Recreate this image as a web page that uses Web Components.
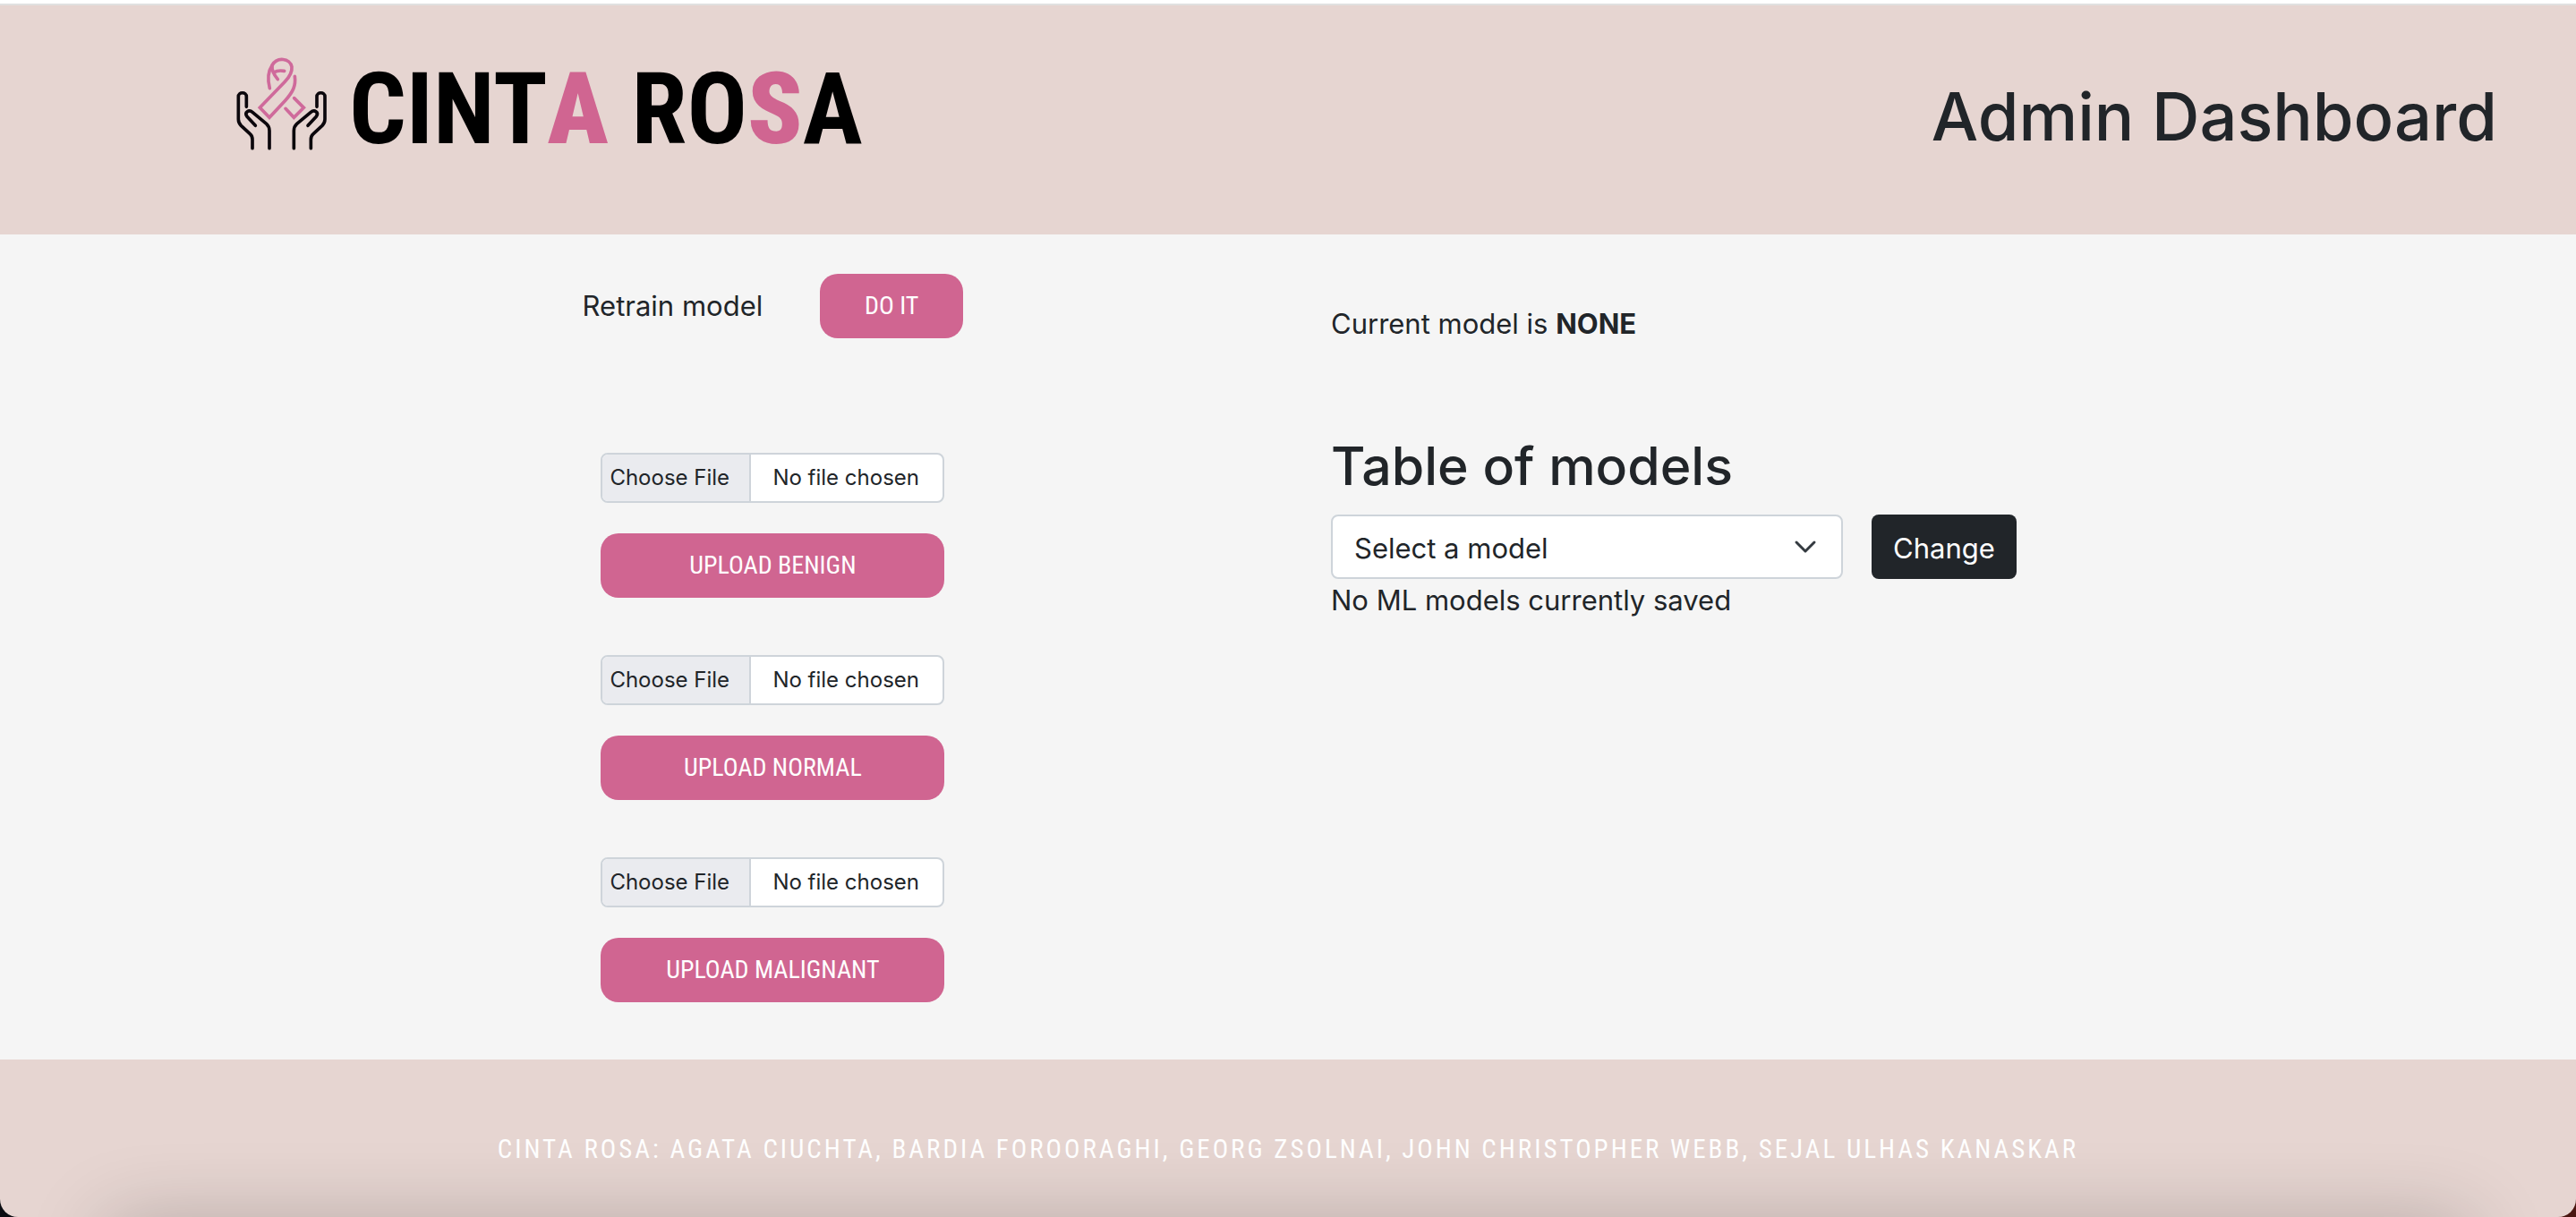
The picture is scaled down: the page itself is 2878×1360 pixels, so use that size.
<!DOCTYPE html>
<html lang="en">
<head>
<meta charset="utf-8">
<title>Cinta Rosa – Admin Dashboard</title>
<style>
  html { background: linear-gradient(90deg, #0b0d12 50%, #4a1611 50%); }
  body {
    margin: 0;
    --pink: #d06591;
    --blush: #e6d5d1;
    --ink: #212529;
    --line: #ced4da;
    --condensed: "Roboto Condensed", "Liberation Sans Narrow", "Liberation Sans", sans-serif;
    font: 400 31px/48px Inter, "Liberation Sans", sans-serif;
    color: var(--ink);
  }
</style>
</head>
<body>
<admin-page></admin-page>

<script>
const define = (name, html) => {
  const template = document.createElement('template');
  template.innerHTML = html;
  customElements.define(name, class extends HTMLElement {
    constructor() {
      super();
      this.attachShadow({ mode: 'open' }).append(template.content.cloneNode(true));
    }
  });
};

define('brand-logo', `
  <style>
    :host { display: flex; align-items: flex-start; gap: 10px; }
    svg { width: 130px; height: 130px; flex: none; fill: none; stroke-width: 11; stroke-linecap: round; stroke-linejoin: round; }
    .hand { stroke: #0b070c; }
    .ribbon { stroke: #cf6a9b; stroke-linejoin: miter; }
    span { font: 700 112px/144px var(--condensed); color: #000; white-space: nowrap; }
    b { color: var(--pink); }
  </style>
  <svg viewBox="0 0 390 390" aria-hidden="true">
    <g class="hand">
      <g id="h">
        <path d="M76 208V174C76 157 49 157 49 174V250Q49 262 58 271L88 299Q96 306 96 318V347"/>
        <path d="M106 271L78 241C68 226 84 216 97 227L143 265Q153 274 153 288V347"/>
      </g>
      <use href="#h" transform="translate(388) scale(-1 1)"/>
    </g>
    <g class="ribbon">
      <path d="M154 146C146 115 150 87 162 69C178 40 222 44 228 74C230 92 221 107 205 124L121 211L153 244L205 188C234 157 242 135 238 106"/>
      <path d="M181 116C172 105 160 88 162 70M168 93C178 86 190 86 203 88"/>
      <path d="M236 179L268 211L235 244L207 214"/>
    </g>
  </svg>
  <span>CINT<b>A</b> RO<b>S</b>A</span>
`);

define('page-header', `
  <style>
    :host { display: block; border-top: 4px solid #fff; background: var(--blush); }
    header { display: flex; justify-content: space-between; align-items: flex-start; box-sizing: border-box; min-height: 258px; padding: 44px 88px 0 250px; border-top: 2px solid #e0e0e0; }
    h1 { margin: 32px 0 0; font: 500 74px/96px Inter, sans-serif; }
  </style>
  <header>
    <brand-logo></brand-logo>
    <h1><slot></slot></h1>
  </header>
`);

define('pink-button', `
  <style>
    :host { display: block; }
    button { width: 100%; height: 72px; padding: 0 40px; border: 0; border-radius: 20px; background: var(--pink); color: #fff; font: 400 28px/48px var(--condensed); white-space: nowrap; }
  </style>
  <button type="button"><slot></slot></button>
`);

define('upload-form', `
  <style>
    :host { display: block; width: 384px; }
    form { display: grid; gap: 34px; }
    input { box-sizing: border-box; width: 100%; height: 56px; border: 2px solid var(--line); border-radius: 8px; background: #fff; color: var(--ink); font: 400 24px/52px Inter, sans-serif; overflow: hidden; }
    input::file-selector-button { height: 52px; width: 166px; margin: 0 24px 0 0; padding: 0 8px; border: 0; border-right: 2px solid var(--line); background: #eaebef; color: var(--ink); font: inherit; text-align: left; }
  </style>
  <form>
    <input type="file" aria-label="Image archive">
    <pink-button><slot></slot></pink-button>
  </form>
`);

define('training-panel', `
  <style>
    :host { display: flex; flex-direction: column; align-items: center; gap: 64px; }
    .retrain { display: flex; align-items: center; gap: 64px; margin-bottom: 64px; }
    .retrain pink-button { width: 160px; }
  </style>
  <div class="retrain"><span>Retrain model</span><pink-button>DO IT</pink-button></div>
  <upload-form>UPLOAD BENIGN</upload-form>
  <upload-form>UPLOAD NORMAL</upload-form>
  <upload-form>UPLOAD MALIGNANT</upload-form>
`);

define('models-panel', `
  <style>
    :host { display: block; padding: 32px 0 0 48px; }
    p { margin: 0; }
    h2 { margin: 96px 0 16px; font: 500 59px/77px Inter, sans-serif; }
    form { display: flex; gap: 32px; }
    .pick { display: grid; width: 572px; }
    .pick > * { grid-area: 1 / 1; }
    select { appearance: none; box-sizing: border-box; width: 100%; height: 72px; padding: 4px 72px 0 24px; border: 2px solid var(--line); border-radius: 8px; background: #fff; color: inherit; font: inherit; }
    svg { width: 32px; height: 24px; place-self: center end; margin-right: 26px; pointer-events: none; fill: none; stroke: #343a40; stroke-width: 3; stroke-linecap: round; stroke-linejoin: round; }
    button { height: 72px; padding: 4px 24px 0; border: 0; border-radius: 8px; background: var(--ink); color: #fff; font: inherit; }
  </style>
  <p>Current model is <b>NONE</b></p>
  <h2>Table of models</h2>
  <form>
    <div class="pick">
      <select aria-label="Select a model"><option>Select a model</option></select>
      <svg viewBox="0 0 32 24" aria-hidden="true"><path d="M6 7L16 17L26 7"/></svg>
    </div>
    <button type="button">Change</button>
  </form>
  <p>No ML models currently saved</p>
`);

define('page-footer', `
  <style>
    :host { display: grid; }
    footer { position: relative; overflow: hidden; padding: 76px 32px 48px; background: var(--blush); border-radius: 0 0 20px 20px; text-align: center; color: #fff; font: 400 29px/48px var(--condensed); letter-spacing: 3px; }
    footer::after { content: ""; position: absolute; top: 100%; left: 120px; right: 120px; height: 80px; box-shadow: 0 8px 90px rgba(0, 0, 0, .24); }
  </style>
  <footer><slot></slot></footer>
`);

define('admin-page', `
  <style>
    :host { display: flex; flex-direction: column; min-height: 100vh; }
    main { display: grid; grid-template-columns: 1fr 1fr; padding: 44px 10% 64px; background: #f5f5f5; }
    page-footer { flex: 1; }
  </style>
  <page-header>Admin Dashboard</page-header>
  <main>
    <training-panel></training-panel>
    <models-panel></models-panel>
  </main>
  <page-footer>CINTA ROSA: AGATA CIUCHTA, BARDIA FOROORAGHI, GEORG ZSOLNAI, JOHN CHRISTOPHER WEBB, SEJAL ULHAS KANASKAR</page-footer>
`);
</script>
</body>
</html>
